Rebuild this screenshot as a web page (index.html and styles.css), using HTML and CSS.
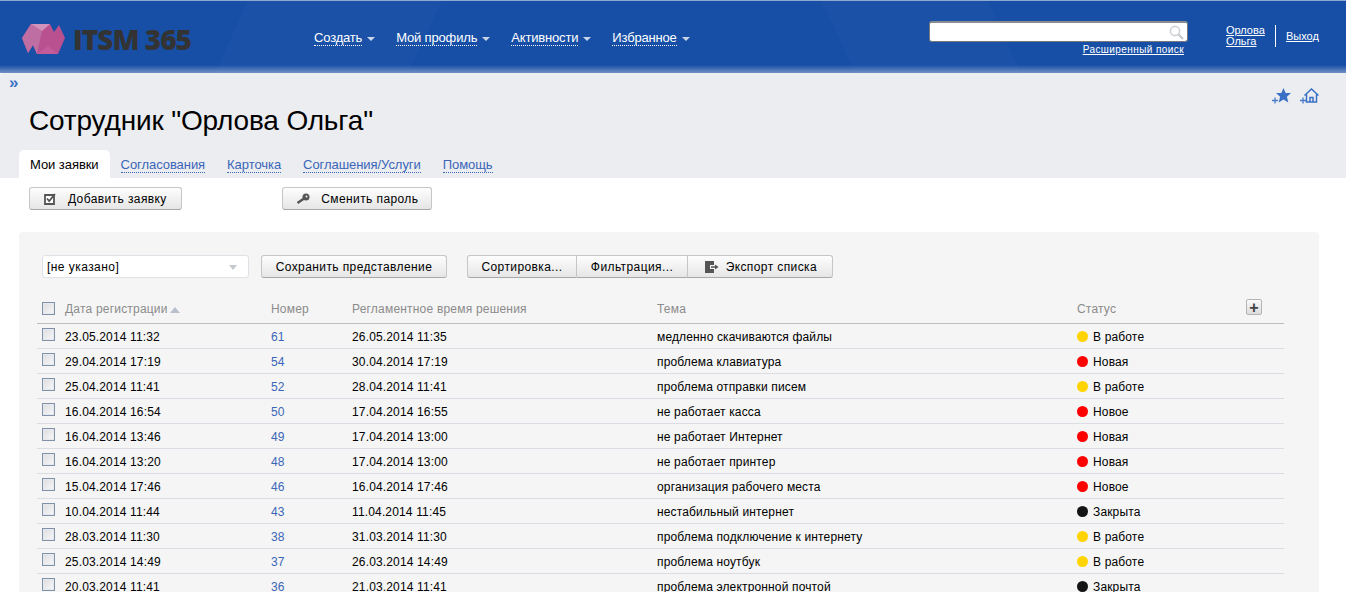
FILE: index.html
```html
<!DOCTYPE html>
<html lang="ru">
	<head>
		<meta charset="UTF-8" />
		<title>ITSM 365</title>
		<link rel="stylesheet" href="styles.css">
	</head>
	<body>
		<header class="top">
			<a class="logo">
				<svg class="logo__mark" width="44" height="30" viewBox="0 0 44 30">
					<polygon points="0,14 9,0 28,0 32,8 37,1 43,14 36,30 15,30 11,21 6,29" fill="#b9508f" />
					<polygon points="0,14 9,0 20,7 15,30 11,21 6,29" fill="#bf6ea3" />
					<polygon points="9,0 28,0 20,7" fill="#d192bb" />
					<polygon points="15,30 26,22 36,30" fill="#c35a9a" />
				</svg>
				<span class="logo__text">ITSM 365</span>
			</a>
			<nav class="nav">
				<a class="nav__item"><span>Создать</span><i class="nav__arrow"></i></a>
				<a class="nav__item"><span>Мой профиль</span><i class="nav__arrow"></i></a>
				<a class="nav__item"><span>Активности</span><i class="nav__arrow"></i></a>
				<a class="nav__item"><span>Избранное</span><i class="nav__arrow"></i></a>
			</nav>
			<div class="search">
				<div class="search__box">
					<svg width="15" height="15" viewBox="0 0 15 15">
						<circle cx="6" cy="6" r="4.6" fill="none" stroke="#cfd3d8" stroke-width="1.6" />
						<path d="M9.5 9.5L14 14" stroke="#c4c8cd" stroke-width="2.2" />
					</svg>
				</div>
				<a class="search__more">Расширенный поиск</a>
			</div>
			<div class="user">
				<a class="user__name">Орлова<br>Ольга</a>
				<a class="user__exit">Выход</a>
			</div>
		</header>

		<section class="head">
			<div class="head__bar">
				<span class="head__toggle">»</span>
				<div class="head__icons">
					<svg width="19" height="16" viewBox="0 0 19 16">
						<path d="M0 12.500h6M3 9.500v6" stroke="#4a7cca" stroke-width="1.300" />
						<path d="M11.500 0l2.200 5h5.300l-4.100 3.700 1.400 5.800-4.800-3.100-4.800 3.100 1.400-5.800L4 5h5.300z" fill="#3a70c6" />
					</svg>
					<svg width="19" height="16" viewBox="0 0 19 16">
						<path d="M0 12.500h6M3 9.500v6" stroke="#4a7cca" stroke-width="1.300" />
						<path d="M4.500 7.500L11.500 1 18.500 7.500M6.500 6.500v7.500h10V6.500M10 14v-4.500h3V14" fill="none" stroke="#3a70c6" stroke-width="1.500" />
					</svg>
				</div>
			</div>
			<h1 class="head__title">Сотрудник "Орлова Ольга"</h1>
			<div class="tabs">
				<a class="tab tab--active">Мои заявки</a>
				<a class="tab"><span>Согласования</span></a>
				<a class="tab"><span>Карточка</span></a>
				<a class="tab"><span>Соглашения/Услуги</span></a>
				<a class="tab"><span>Помощь</span></a>
			</div>
		</section>

		<div class="actions">
			<button class="btn btn--add">
				<svg width="12" height="12" viewBox="0 0 12 12">
					<path d="M1 2h9v9H1z" fill="#fff" stroke="#555" stroke-width="1.800" />
					<path d="M3 5.500l2.200 2.500L11 1" fill="none" stroke="#555" stroke-width="1.800" />
				</svg>
				Добавить заявку
			</button>
			<button class="btn btn--pass">
				<svg width="14" height="12" viewBox="0 0 14 12">
					<circle cx="10" cy="4" r="3.500" fill="#555" />
					<circle cx="10.500" cy="3.500" r="1" fill="#f2f2f2" />
					<path d="M8 5.500L1.500 10" stroke="#555" stroke-width="2.500" />
				</svg>
				Сменить пароль
			</button>
		</div>

		<main class="panel">
			<div class="toolbar">
				<div class="select">[не указано]<i class="select__arrow"></i></div>
				<button class="btn btn--save">Сохранить представление</button>
				<div class="btn-group">
					<button class="btn btn--sort">Сортировка...</button>
					<button class="btn btn--filter">Фильтрация...</button>
					<button class="btn btn--export">
						<svg width="14" height="12" viewBox="0 0 14 12">
							<path d="M0 0h9v4H5v4h4v4H0z" fill="#555" />
							<path d="M6 6h4.500" stroke="#555" stroke-width="1.500" />
							<path d="M10 3.500L13.500 6 10 8.500z" fill="#555" />
						</svg>
						Экспорт списка
					</button>
				</div>
			</div>

			<table class="list">
				<thead>
					<tr>
						<th class="col-check"><i class="check check--head"></i></th>
						<th class="col-date">Дата регистрации<i class="sort-arrow"></i></th>
						<th class="col-num">Номер</th>
						<th class="col-term">Регламентное время решения</th>
						<th class="col-subject">Тема</th>
						<th class="col-status">Статус<button class="add-col">+</button></th>
					</tr>
				</thead>
				<tbody>
					<tr><td><i class="check"></i></td><td>23.05.2014 11:32</td><td><a>61</a></td><td>26.05.2014 11:35</td><td>медленно скачиваются файлы</td><td><i class="dot dot--work"></i>В работе</td></tr>
					<tr><td><i class="check"></i></td><td>29.04.2014 17:19</td><td><a>54</a></td><td>30.04.2014 17:19</td><td>проблема клавиатура</td><td><i class="dot dot--new"></i>Новая</td></tr>
					<tr><td><i class="check"></i></td><td>25.04.2014 11:41</td><td><a>52</a></td><td>28.04.2014 11:41</td><td>проблема отправки писем</td><td><i class="dot dot--work"></i>В работе</td></tr>
					<tr><td><i class="check"></i></td><td>16.04.2014 16:54</td><td><a>50</a></td><td>17.04.2014 16:55</td><td>не работает касса</td><td><i class="dot dot--new"></i>Новое</td></tr>
					<tr><td><i class="check"></i></td><td>16.04.2014 13:46</td><td><a>49</a></td><td>17.04.2014 13:00</td><td>не работает Интернет</td><td><i class="dot dot--new"></i>Новая</td></tr>
					<tr><td><i class="check"></i></td><td>16.04.2014 13:20</td><td><a>48</a></td><td>17.04.2014 13:00</td><td>не работает принтер</td><td><i class="dot dot--new"></i>Новая</td></tr>
					<tr><td><i class="check"></i></td><td>15.04.2014 17:46</td><td><a>46</a></td><td>16.04.2014 17:46</td><td>организация рабочего места</td><td><i class="dot dot--new"></i>Новое</td></tr>
					<tr><td><i class="check"></i></td><td>10.04.2014 11:44</td><td><a>43</a></td><td>11.04.2014 11:45</td><td>нестабильный интернет</td><td><i class="dot dot--closed"></i>Закрыта</td></tr>
					<tr><td><i class="check"></i></td><td>28.03.2014 11:30</td><td><a>38</a></td><td>31.03.2014 11:30</td><td>проблема подключение к интернету</td><td><i class="dot dot--work"></i>В работе</td></tr>
					<tr><td><i class="check"></i></td><td>25.03.2014 14:49</td><td><a>37</a></td><td>26.03.2014 14:49</td><td>проблема ноутбук</td><td><i class="dot dot--work"></i>В работе</td></tr>
					<tr><td><i class="check"></i></td><td>20.03.2014 11:41</td><td><a>36</a></td><td>21.03.2014 11:41</td><td>проблема электронной почтой</td><td><i class="dot dot--closed"></i>Закрыта</td></tr>
				</tbody>
			</table>
		</main>
	</body>
</html>
```

FILE: styles.css
```css
html,
body {
	height: 592px;
	overflow: hidden;
}
body {
	margin: 0;
	background: #fff;
	color: #000;
	font: 12px "Liberation Sans", Arial, sans-serif;
}
i {
	display: inline-block;
	font-style: normal;
}

/* header */

.top {
	display: flex;
	height: 73px;
	box-sizing: border-box;
	border-top: 1px solid #8fa9d2;
	background:
		linear-gradient(180deg, transparent 64px, #7290c6 72px),
		linear-gradient(115deg, transparent 18%, rgba(255, 255, 255, 0.015) 18%, rgba(255, 255, 255, 0.015) 32%, transparent 32%),
		linear-gradient(65deg, transparent 62%, rgba(255, 255, 255, 0.015) 62%, rgba(255, 255, 255, 0.015) 74%, transparent 74%),
		#174fa6;
	color: #fff;
}
.logo {
	display: flex;
	align-items: center;
	gap: 7px;
	width: 292px;
	height: 30px;
	margin: 23px 0 0 22px;
}
.logo__text {
	color: #333;
	font: 800 28px "Open Sans", sans-serif;
	letter-spacing: -1px;
}
.nav {
	display: flex;
	gap: 21px;
	width: 615px;
	padding-top: 29px;
	font-size: 13px;
	letter-spacing: -0.17px;
}
.nav__item span {
	border-bottom: 1px dotted #fff;
}
.nav__arrow {
	width: 0;
	height: 0;
	margin-left: 5px;
	border: 4px solid transparent;
	border-top: 4px solid #c9d5ea;
	border-bottom: 0;
	vertical-align: 1px;
}
.search {
	width: 259px;
	padding-top: 20px;
	box-sizing: border-box;
}
.search__box {
	display: flex;
	justify-content: flex-end;
	align-items: center;
	width: 259px;
	height: 21px;
	box-sizing: border-box;
	padding-right: 3px;
	border: 1px solid #77797e;
	border-top: 2px solid #8a8c90;
	border-radius: 3px;
	background: #fff;
}
.search__more {
	display: block;
	width: 255px;
	margin-top: 2px;
	font-size: 10px;
	text-align: right;
	text-decoration: underline;
	line-height: 12px;
	letter-spacing: 0.42px;
}
.user {
	display: flex;
	align-items: flex-start;
	margin: 24px 0 0 38px;
	font-size: 11px;
	line-height: 11px;
	text-decoration: underline;
}
.user__name {
	width: 39px;
	height: 22px;
	padding-right: 10px;
	border-right: 1px solid #fff;
}
.user__exit {
	margin: 6px 0 0 10px;
}

/* page head */

.head {
	height: 105px;
	border-radius: 3px 0 0 0;
	background: #ecedf0;
}
.head__bar {
	display: flex;
	justify-content: space-between;
	padding: 0 27px 0 9px;
}
.head__toggle {
	color: #3a70c6;
	font-size: 17px;
	font-weight: bold;
	line-height: 19px;
}
.head__icons {
	display: flex;
	gap: 9px;
	margin: 15px 0 1px;
}
.head__title {
	margin: 0 0 0 29px;
	font-size: 28px;
	font-weight: normal;
	letter-spacing: -0.16px;
	line-height: 32px;
}
.tabs {
	display: flex;
	margin: 13px 0 0 19px;
}
.tab {
	height: 28px;
	padding: 0 11px;
	font-size: 13px;
	letter-spacing: -0.06px;
	line-height: 29px;
	color: #3a66b8;
}
.tab span {
	border-bottom: 1px dotted #3a66b8;
}
.tab--active {
	border-radius: 5px 5px 0 0;
	background: #fff;
	color: #000;
}

/* buttons */

.btn {
	height: 23px;
	padding: 0;
	border: 1px solid #c6c6c6;
	border-bottom-color: #a8a8a8;
	border-radius: 3px;
	background: linear-gradient(180deg, #fdfdfd, #e6e6e6);
	color: #000;
	font: 12px "Liberation Sans", Arial, sans-serif;
	letter-spacing: 0.4px;
}
.btn svg {
	margin-right: 8px;
	vertical-align: -2px;
}
.actions {
	display: flex;
	padding: 9px 0 0 29px;
}
.btn--add {
	width: 153px;
}
.btn--pass {
	width: 150px;
	margin-left: 100px;
}

/* list */

.panel {
	margin: 22px 27px 0 19px;
	height: 400px;
	padding: 23px 35px 0 18px;
	border-radius: 4px;
	background: #f5f5f5;
}
.toolbar {
	display: flex;
	align-items: center;
	margin-left: 5px;
}
.select {
	position: relative;
	width: 207px;
	height: 23px;
	box-sizing: border-box;
	padding-left: 4px;
	border: 1px solid #dfe1e6;
	border-radius: 3px;
	background: #fff;
	line-height: 22px;
	letter-spacing: 0.45px;
}
.select__arrow {
	position: absolute;
	top: 9px;
	right: 11px;
	border: 4px solid transparent;
	border-top: 5px solid #c4c8cf;
	border-bottom: 0;
}
.btn--save {
	width: 186px;
	margin-left: 12px;
}
.btn-group {
	display: flex;
	margin-left: 20px;
}
.btn-group .btn {
	border-radius: 0;
	border-left-width: 0;
}
.btn-group .btn:first-child {
	border-left-width: 1px;
	border-radius: 3px 0 0 3px;
}
.btn-group .btn:last-child {
	border-radius: 0 3px 3px 0;
}
.btn--sort {
	width: 110px;
}
.btn--filter {
	width: 111px;
}
.btn--export {
	width: 145px;
	padding-left: 2px;
}
.btn--export svg {
	margin-right: 3px;
}
.list {
	width: 1247px;
	margin-top: 17px;
	border-collapse: collapse;
	table-layout: fixed;
}
.list th {
	position: relative;
	height: 28px;
	padding: 0;
	border-bottom: 1px solid #bdbdbd;
	color: #8b8b8b;
	font-weight: normal;
	text-align: left;
	letter-spacing: 0.2px;
}
.list td {
	height: 23px;
	padding: 1px 0 0;
	border-bottom: 1px solid #dcdde4;
	letter-spacing: 0.15px;
}
.list a {
	color: #3a66b8;
}
.col-check {
	width: 28px;
}
.col-date {
	width: 206px;
}
.col-num {
	width: 81px;
}
.col-term {
	width: 305px;
}
.col-subject {
	width: 420px;
}
.check {
	display: block;
	width: 11px;
	height: 11px;
	margin: 0 0 5px 5px;
	border: 1px solid #7f91ab;
	box-shadow: inset 0 0 0 1px #e6e8ec;
	background: linear-gradient(135deg, #dcdde0, #f8f8f9);
}
.check--head {
	margin-bottom: 1px;
}
.sort-arrow {
	margin-left: 2px;
	border: 5px solid transparent;
	border-top: 0;
	border-bottom: 6px solid #b9c0cc;
	vertical-align: 0;
}
.add-col {
	position: absolute;
	top: 4px;
	right: 22px;
	width: 16px;
	height: 16px;
	padding: 0;
	border: 1px solid #b5b5b5;
	border-radius: 2px;
	background: linear-gradient(180deg, #fafafa, #dcdcdc);
	color: #444;
	font: bold 16px/13px "Liberation Sans", Arial, sans-serif;
}
.dot {
	width: 11px;
	height: 11px;
	margin-right: 5px;
	border-radius: 50%;
	vertical-align: -1px;
}
.dot--work {
	background: #ffd400;
}
.dot--new {
	background: #ff0000;
}
.dot--closed {
	background: #141414;
}
```
